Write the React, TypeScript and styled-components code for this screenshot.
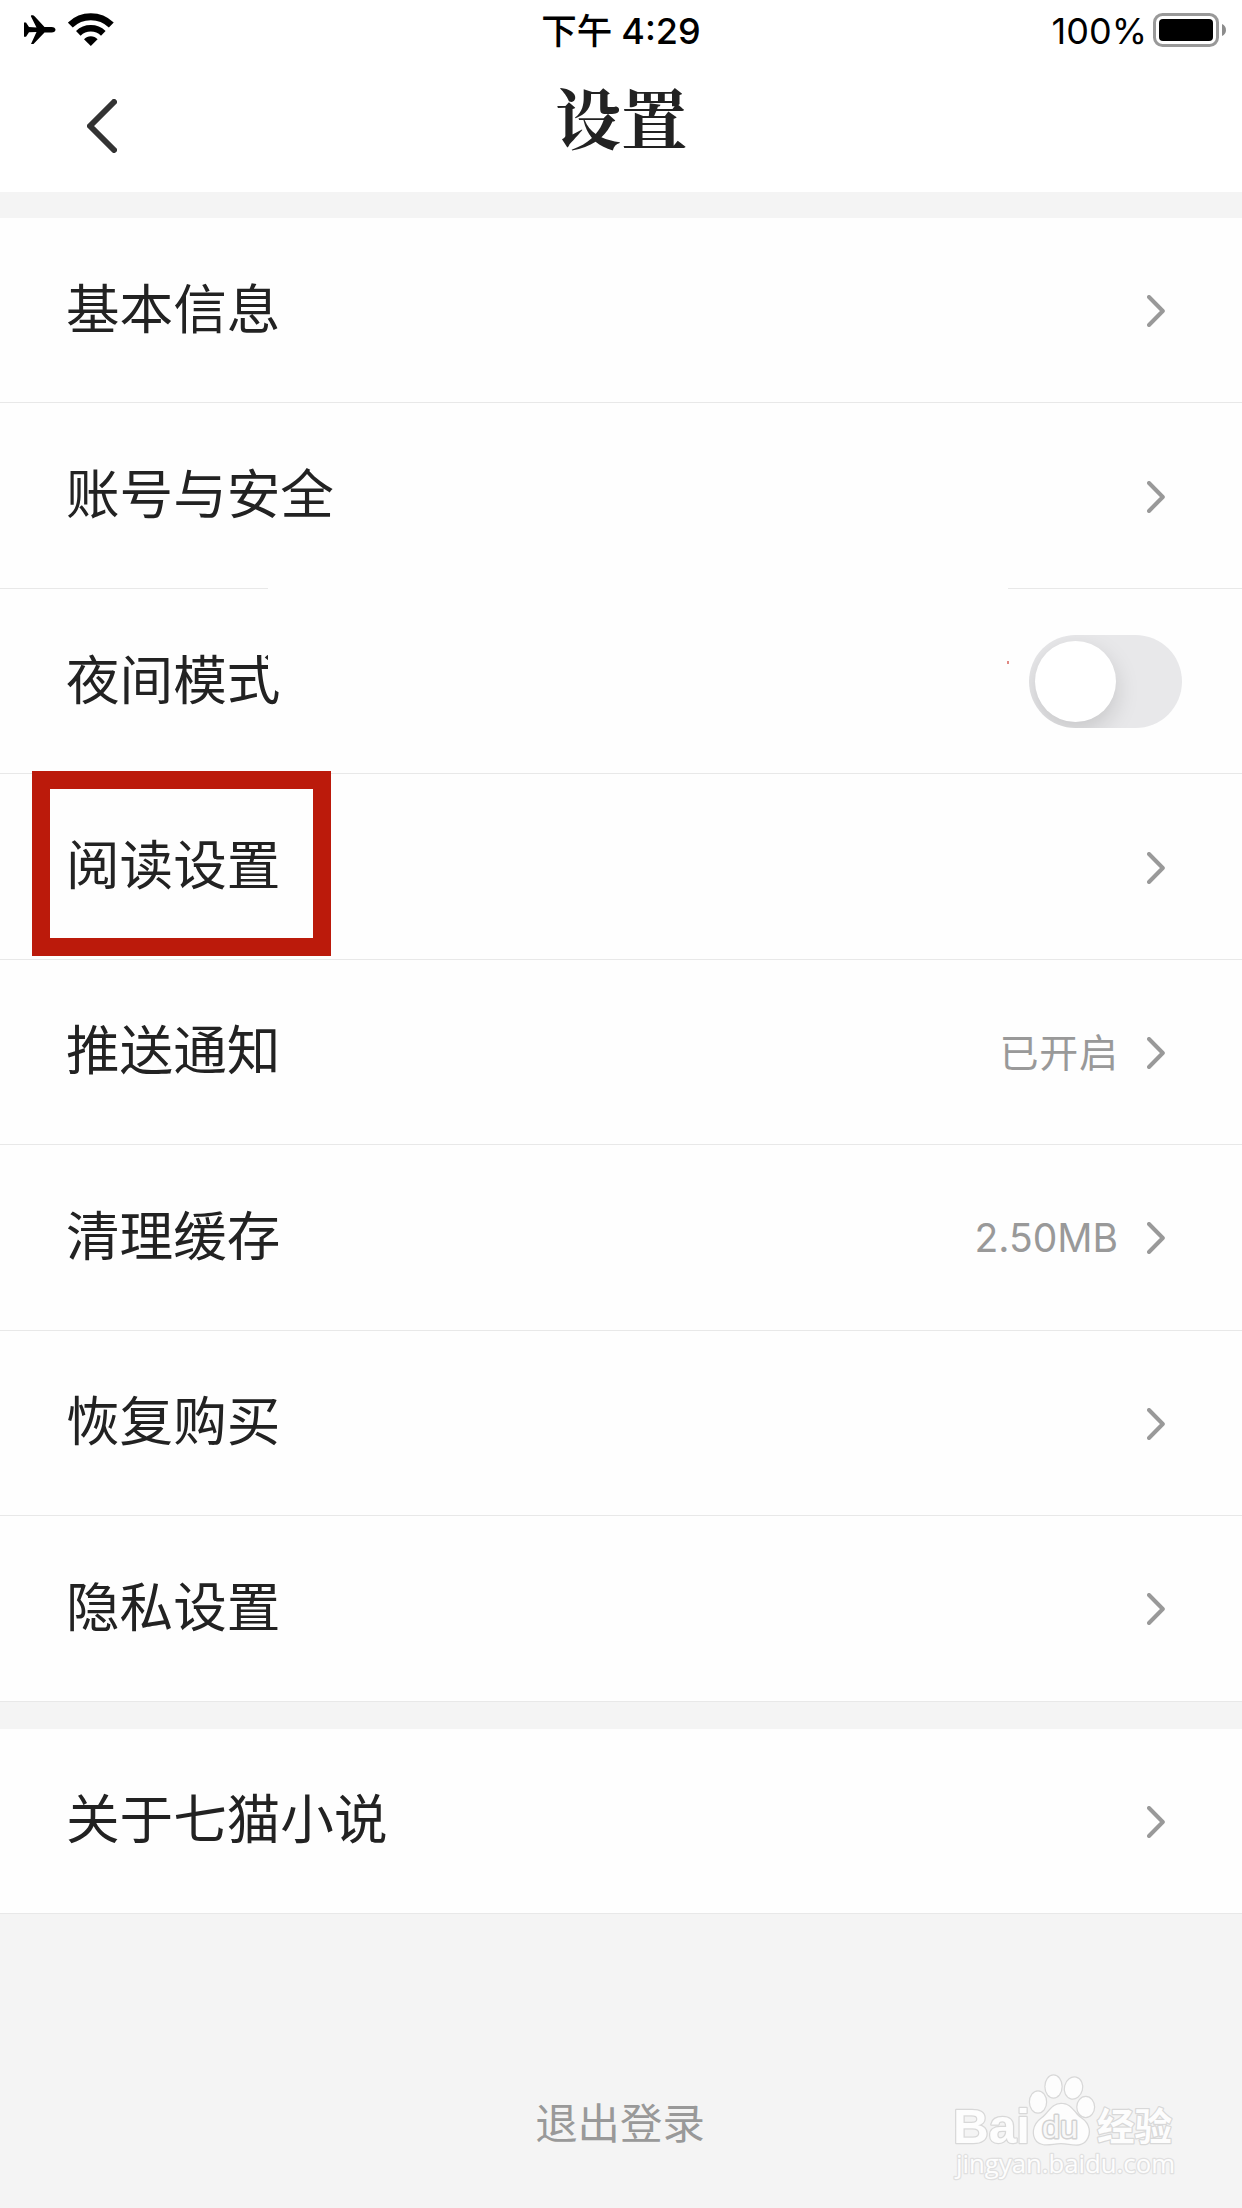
import React from 'react';
import styled, { createGlobalStyle } from 'styled-components';

const sans = `Inter, "Noto Sans CJK SC", sans-serif`;

const Global = createGlobalStyle`
  html, body { margin: 0; padding: 0; background: #f4f4f4; }
  *, *::before, *::after { box-sizing: border-box; }
`;

const Screen = styled.div`
  width: 1242px;
  height: 2208px;
  display: flex;
  flex-direction: column;
  background: #f4f4f4;
  font-family: ${sans};
  color: #222;
  overflow: hidden;
`;

const StatusBar = styled.div`
  height: 60px;
  flex: none;
  display: grid;
  grid-template-columns: 1fr auto 1fr;
  align-items: center;
  padding: 0 16px;
  background: #fff;
  color: #000;
`;

const StatusLeft = styled.div`
  display: flex;
  align-items: center;
  gap: 12px;
  padding-left: 8px;
`;

const Clock = styled.div`
  display: flex;
  align-items: baseline;
  gap: 9px;
  padding-top: 3px;
  font-size: 36px;
  font-weight: 500;
  line-height: 57px;
`;

const Meridiem = styled.span`
  font-size: 35.5px;
`;

const StatusRight = styled.div`
  display: flex;
  justify-content: flex-end;
  align-items: center;
  gap: 8px;
`;

const Percent = styled.span`
  padding-top: 3px;
  font-size: 36px;
  line-height: 57px;
  margin-right: -2px;
`;

const NavBar = styled.header`
  height: 132px;
  flex: none;
  display: grid;
  grid-template-columns: 1fr auto 1fr;
  background: #fff;
`;

const BackButton = styled.button`
  display: flex;
  align-items: flex-start;
  padding: 39px 0 0 87px;
  border: 0;
  background: none;
`;

const Title = styled.h1`
  margin: 9px 0 0;
  font-family: "Noto Serif CJK SC", "Source Han Serif SC", "Songti SC", "Noto Sans CJK SC", serif;
  font-size: 66px;
  line-height: 94px;
  height: 94px;
  font-weight: 700;
`;

const Group = styled.section<{ $top: number }>`
  position: relative;
  flex: none;
  margin-top: ${(p) => p.$top}px;
`;

const Row = styled.div`
  position: relative;
  height: 185.45px;
  display: flex;
  align-items: center;
  padding: 0 77px 0 66px;
  background: #fefefe;
  border-bottom: 1px solid #e8e8e8;
`;

const Label = styled.span`
  flex: 1;
  font-size: 53.6px;
  line-height: 80px;
  padding-bottom: 1px;
`;

const Value = styled.span<{ $spacing?: number }>`
  margin-right: ${(p) => 29 - (p.$spacing ?? 0)}px;
  padding-top: 2px;
  font-size: 39px;
  line-height: 60px;
  letter-spacing: ${(p) => p.$spacing ?? 0}px;
  color: #999;
`;

const ChevronBox = styled.span`
  display: flex;
  padding-top: 2px;
`;

const Toggle = styled.button`
  width: 153px;
  height: 93px;
  margin-right: -17px;
  padding: 6px;
  display: flex;
  border: 0;
  border-radius: 47px;
  background: #e8e8ea;
  overflow: hidden;
`;

const Knob = styled.span`
  width: 81px;
  height: 81px;
  border-radius: 50%;
  background: #fff;
  box-shadow: 0 9px 24px rgba(0, 0, 0, 0.15);
`;

const Highlight = styled.div`
  position: absolute;
  left: 32px;
  top: -3px;
  width: 299px;
  height: 185px;
  border: 18px solid #bb1a0b;
  z-index: 2;
`;

const Patch = styled.div`
  position: absolute;
  left: 268px;
  top: -8px;
  width: 740px;
  height: 98px;
  background: #fefefe;
`;

const Speck = styled.div`
  position: absolute;
  left: 1007px;
  top: 72px;
  width: 2px;
  height: 3px;
  background: #e08a84;
`;

const Footer = styled.footer`
  position: relative;
  flex: 1;
  display: flex;
  justify-content: center;
  padding: 178px 2px 0 0;
`;

const Logout = styled.button`
  height: 64px;
  padding: 0;
  border: 0;
  background: none;
  font-family: ${sans};
  font-size: 42.4px;
  line-height: 64px;
  color: #999;
`;

const Watermark = styled.div`
  position: absolute;
  left: 940px;
  top: 149px;
  width: 250px;
  height: 120px;
`;

const Chevron = () => (
  <ChevronBox>
    <svg width="18" height="32" viewBox="0 0 18 32" fill="none" stroke="#999" strokeWidth="4" strokeLinecap="round" strokeLinejoin="round">
      <path d="M2 2 L15.8 16 L2 30" />
    </svg>
  </ChevronBox>
);

const Plane = () => (
  <svg width="32" height="30" viewBox="0 0 32 30">
    <path d="M0 7.500H2L5 12 12.500 12.500 7 1.500C6.700.700 7 .300 8 .300 9.400.300 10 .700 10.800 1.500L20.500 12H27.500C30 12 31.500 13.300 31.500 14.800S30 17.500 27.500 17.500H20.500L9.500 29H7L12.500 17 5 17.300 2 21.800H0Z" />
  </svg>
);

const Wifi = () => (
  <svg width="46" height="34" viewBox="0 0 46 34">
    <g fill="none" stroke="#000">
      <path d="M2.300 12.100A29.500 29.500 0 0 1 43.300 12.100" strokeWidth="7" />
      <path d="M10.300 20.300A18 18 0 0 1 35.300 20.300" strokeWidth="6.600" />
    </g>
    <path d="M22.800 33L16 26.200C19.500 22.200 26.100 22.200 29.600 26.200Z" />
  </svg>
);

const Battery = () => (
  <svg width="73" height="34" viewBox="0 0 73 34">
    <rect x="1.500" y="1.500" width="63" height="31" rx="8" fill="none" stroke="#999" strokeWidth="3" />
    <rect x="6" y="6" width="54" height="22" rx="4" />
    <path d="M69 11C74.300 12.800 74.300 21.200 69 23Z" fill="#8c8c8c" />
  </svg>
);

const BaiduMark = () => (
  <svg width="250" height="120" viewBox="940 2063 250 120" fill="#fdfdfd" stroke="#d8d8d8" strokeWidth="2.500" paintOrder="stroke" strokeLinejoin="round">
    <text x="953" y="2143" fontFamily="Liberation Sans" fontWeight="700" fontSize="49" textLength="77" lengthAdjust="spacingAndGlyphs">Bai</text>
    <ellipse cx="1038" cy="2102" rx="8" ry="10.500" />
    <ellipse cx="1053.500" cy="2086.500" rx="8" ry="11" />
    <ellipse cx="1073.500" cy="2088" rx="8.500" ry="10.500" transform="rotate(14 1073.500 2088)" />
    <ellipse cx="1085.700" cy="2107" rx="8.300" ry="10" />
    <path d="M1061 2104C1051 2104 1049 2114 1041 2119C1033 2125 1032 2135 1037 2141C1043 2147 1052 2143 1061 2143S1080 2148 1086 2140C1091 2133 1089 2124 1082 2119C1073 2113 1072 2104 1061 2104Z" />
    <text x="1042" y="2138" fontFamily="Liberation Sans" fontWeight="400" fontSize="32" textLength="36" lengthAdjust="spacingAndGlyphs" fill="#f8f8f8" stroke="#d2d2d2" strokeWidth="3">du</text>
    <text x="1097" y="2140" fontFamily="Noto Sans CJK SC" fontWeight="700" fontSize="38" textLength="75" lengthAdjust="spacingAndGlyphs">经验</text>
    <text x="956" y="2173" fontFamily="Open Sans, Noto Sans" fontSize="26" textLength="219" lengthAdjust="spacingAndGlyphs" stroke="#e0e0e0">jingyan.baidu.com</text>
  </svg>
);

export default function App() {
  return (
    <>
      <Global />
      <Screen>
        <StatusBar>
          <StatusLeft><Plane /><Wifi /></StatusLeft>
          <Clock><Meridiem>下午</Meridiem><span>4:29</span></Clock>
          <StatusRight><Percent>100%</Percent><Battery /></StatusRight>
        </StatusBar>
        <NavBar>
          <BackButton aria-label="返回">
            <svg width="30" height="54" viewBox="0 0 30 54" fill="none" stroke="#333" strokeWidth="6" strokeLinecap="round" strokeLinejoin="round">
              <path d="M27 3L3 27L27 51" />
            </svg>
          </BackButton>
          <Title>设置</Title>
        </NavBar>
        <Group $top={26}>
          <Row><Label>基本信息</Label><Chevron /></Row>
          <Row><Label>账号与安全</Label><Chevron /></Row>
          <Row>
            <Label>夜间模式</Label>
            <Patch />
            <Speck />
            <Toggle role="switch" aria-checked={false}><Knob /></Toggle>
          </Row>
          <Row><Highlight /><Label>阅读设置</Label><Chevron /></Row>
          <Row><Label>推送通知</Label><Value $spacing={0.8}>已开启</Value><Chevron /></Row>
          <Row><Label>清理缓存</Label><Value>2.50MB</Value><Chevron /></Row>
          <Row><Label>恢复购买</Label><Chevron /></Row>
          <Row><Label>隐私设置</Label><Chevron /></Row>
        </Group>
        <Group $top={27}>
          <Row><Label>关于七猫小说</Label><Chevron /></Row>
        </Group>
        <Footer>
          <Logout>退出登录</Logout>
          <Watermark><BaiduMark /></Watermark>
        </Footer>
      </Screen>
    </>
  );
}
